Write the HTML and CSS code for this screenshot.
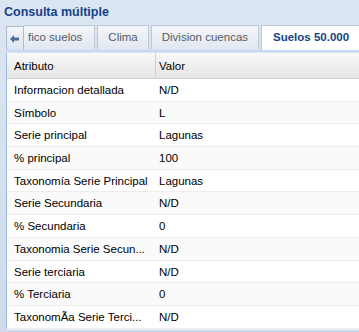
FILE: index.html
```html
<!DOCTYPE html>
<html lang="es">
<head>
  <meta charset="UTF-8">
  <title>Consulta múltiple</title>
  <link rel="stylesheet" href="styles.css">
</head>
<body>
  <div class="window">
    <div class="window-header">Consulta múltiple</div>

    <div class="tab-strip">
      <div class="tab-scroller">
        <svg width="10" height="8" viewBox="0 0 10 8"><path d="M0 4 L4 0 L4 2.5 L9 2.5 L9 5.5 L4 5.5 L4 8 Z" fill="#4a6e9c"/></svg>
      </div>
      <div class="tabs">
        <div class="tab tab-cut">fico suelos</div>
        <div class="tab">Clima</div>
        <div class="tab">Division cuencas</div>
        <div class="tab active">Suelos 50.000</div>
      </div>
    </div>

    <div class="grid">
      <div class="grid-row grid-head">
        <div class="cell col-attr">Atributo</div>
        <div class="cell col-val">Valor</div>
      </div>
      <div class="grid-row"><div class="cell col-attr">Informacion detallada</div><div class="cell col-val">N/D</div></div>
      <div class="grid-row alt"><div class="cell col-attr">Símbolo</div><div class="cell col-val">L</div></div>
      <div class="grid-row"><div class="cell col-attr">Serie principal</div><div class="cell col-val">Lagunas</div></div>
      <div class="grid-row alt"><div class="cell col-attr">% principal</div><div class="cell col-val">100</div></div>
      <div class="grid-row"><div class="cell col-attr">Taxonomía Serie Principal</div><div class="cell col-val">Lagunas</div></div>
      <div class="grid-row alt"><div class="cell col-attr">Serie Secundaria</div><div class="cell col-val">N/D</div></div>
      <div class="grid-row"><div class="cell col-attr">% Secundaria</div><div class="cell col-val">0</div></div>
      <div class="grid-row alt"><div class="cell col-attr">Taxonomia Serie Secun...</div><div class="cell col-val">N/D</div></div>
      <div class="grid-row"><div class="cell col-attr">Serie terciaria</div><div class="cell col-val">N/D</div></div>
      <div class="grid-row alt"><div class="cell col-attr">% Terciaria</div><div class="cell col-val">0</div></div>
      <div class="grid-row"><div class="cell col-attr">TaxonomÃa Serie Terci...</div><div class="cell col-val">N/D</div></div>
    </div>
    <div class="scroll-bar"></div>
  </div>
</body>
</html>
```

FILE: styles.css
```css
body {
  margin: 0;
  font-family: "Liberation Sans", Arial, sans-serif;
  background: #dfe8f6;
  overflow: hidden;
}

.window {
  width: 359px;
  height: 332px;
  background: linear-gradient(to bottom, #dce6f2, #cfdbea);
}

.window-header {
  height: 24px;
  line-height: 24px;
  padding-left: 4px;
  font-size: 12.5px;
  font-weight: bold;
  color: #15428b;
}

.tab-strip {
  display: flex;
  align-items: flex-end;
  height: 26px;
  margin-left: 6px;
  border-bottom: 2px solid #c6d9f2;
}

.tab-scroller {
  width: 18px;
  height: 24px;
  display: flex;
  align-items: center;
  justify-content: center;
  background: linear-gradient(to bottom, #f3f6fa, #dce4ee);
  border: 1px solid #aabbd2;
  border-bottom: none;
  box-sizing: border-box;
}

.tabs {
  display: flex;
  gap: 2px;
  overflow: hidden;
  flex: 1;
}

.tab {
  height: 24px;
  line-height: 23px;
  padding: 0 10px;
  font-size: 11.5px;
  color: #565c68;
  white-space: nowrap;
  background: linear-gradient(to bottom, #f3f5f9, #e2e8f0);
  border: 1px solid #b9c7d9;
  border-bottom: none;
  box-sizing: border-box;
}

.tab-cut {
  padding-left: 4px;
  padding-right: 12px;
  border-left: none;
}

.tab.active {
  background: #ffffff;
  color: #15428b;
  font-weight: bold;
  padding: 0 11px;
  height: 25px;
}

.grid {
  margin-left: 6px;
  height: 276px;
  background: #ffffff;
  border-left: 1px solid #99bbe8;
}

.grid-row {
  display: flex;
  height: 22.7px;
  line-height: 22px;
  font-size: 11.5px;
  color: #000;
  border-bottom: 1px solid #ededed;
  box-sizing: border-box;
}

.grid-row.alt {
  background: #fafafa;
}

.grid-head {
  height: 26px;
  line-height: 26px;
  margin-top: 1px;
  background: linear-gradient(to bottom, #f9f9f9, #e5e5e5);
  border-bottom: 1px solid #d0d0d0;
}

.cell {
  padding-left: 7px;
  white-space: nowrap;
  overflow: hidden;
  box-sizing: border-box;
}

.col-attr {
  width: 149px;
}

.grid-head .col-attr {
  border-right: 1px solid #d0d0d0;
}

.col-val {
  flex: 1;
  padding-left: 3px;
}

.scroll-bar {
  margin-left: 6px;
  height: 4px;
  background: #c6d6ee;
  border-top: 1px solid #eef2f8;
}
```
